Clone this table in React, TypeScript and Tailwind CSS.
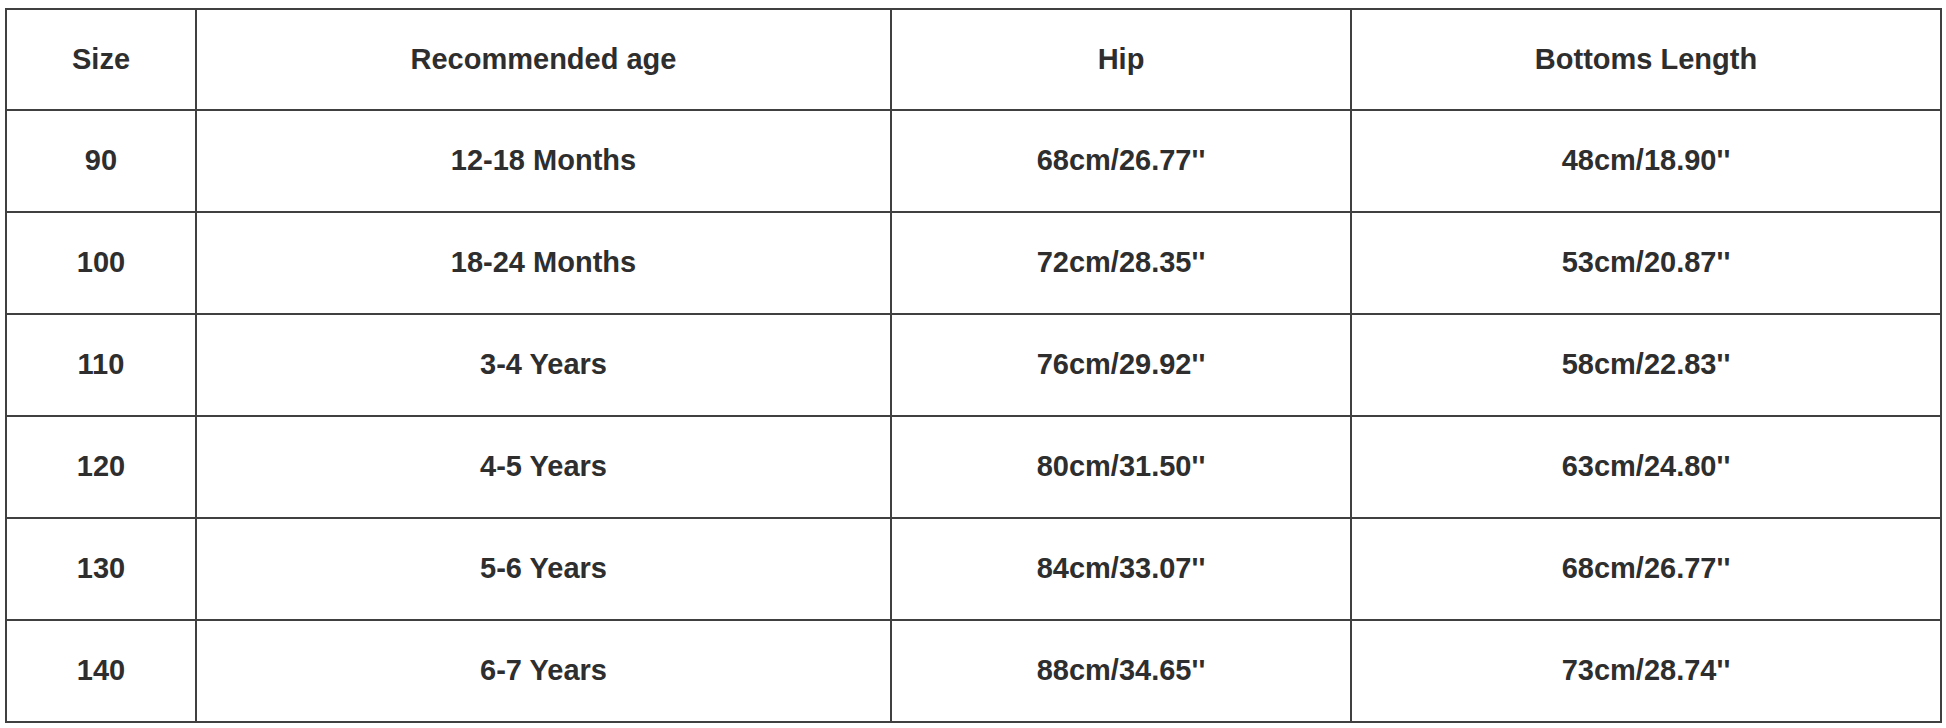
const headers = ['Size', 'Recommended age', 'Hip', 'Bottoms Length']

const rows = [
  ['90', '12-18 Months', '68cm/26.77\'\'', '48cm/18.90\'\''],
  ['100', '18-24 Months', '72cm/28.35\'\'', '53cm/20.87\'\''],
  ['110', '3-4 Years', '76cm/29.92\'\'', '58cm/22.83\'\''],
  ['120', '4-5 Years', '80cm/31.50\'\'', '63cm/24.80\'\''],
  ['130', '5-6 Years', '84cm/33.07\'\'', '68cm/26.77\'\''],
  ['140', '6-7 Years', '88cm/34.65\'\'', '73cm/28.74\'\''],
]

function Cell({ children, tall }: { children: React.ReactNode; tall?: boolean }) {
  return (
    <div
      className={`flex items-center justify-center border-r-2 border-b-2 border-[#404040] ${
        tall ? 'h-[102px]' : 'h-[101px]'
      }`}
    >
      {children}
    </div>
  )
}

export default function App() {
  return (
    <div className="w-[1946px] h-[728px] bg-white pl-[5px] pt-[8px] font-['Liberation_Sans',Arial,sans-serif] text-[29px] font-bold text-[#2e2e2e]">
      {/* Size chart */}
      <div className="grid w-[1937px] grid-cols-[190px_695px_460px_590px] border-l-2 border-t-2 border-[#404040]">
        {headers.map((h) => (
          <Cell key={h}>{h}</Cell>
        ))}
        {rows.map((row) =>
          row.map((value, i) => (
            <Cell key={row[0] + i} tall>
              {value}
            </Cell>
          ))
        )}
      </div>
    </div>
  )
}
